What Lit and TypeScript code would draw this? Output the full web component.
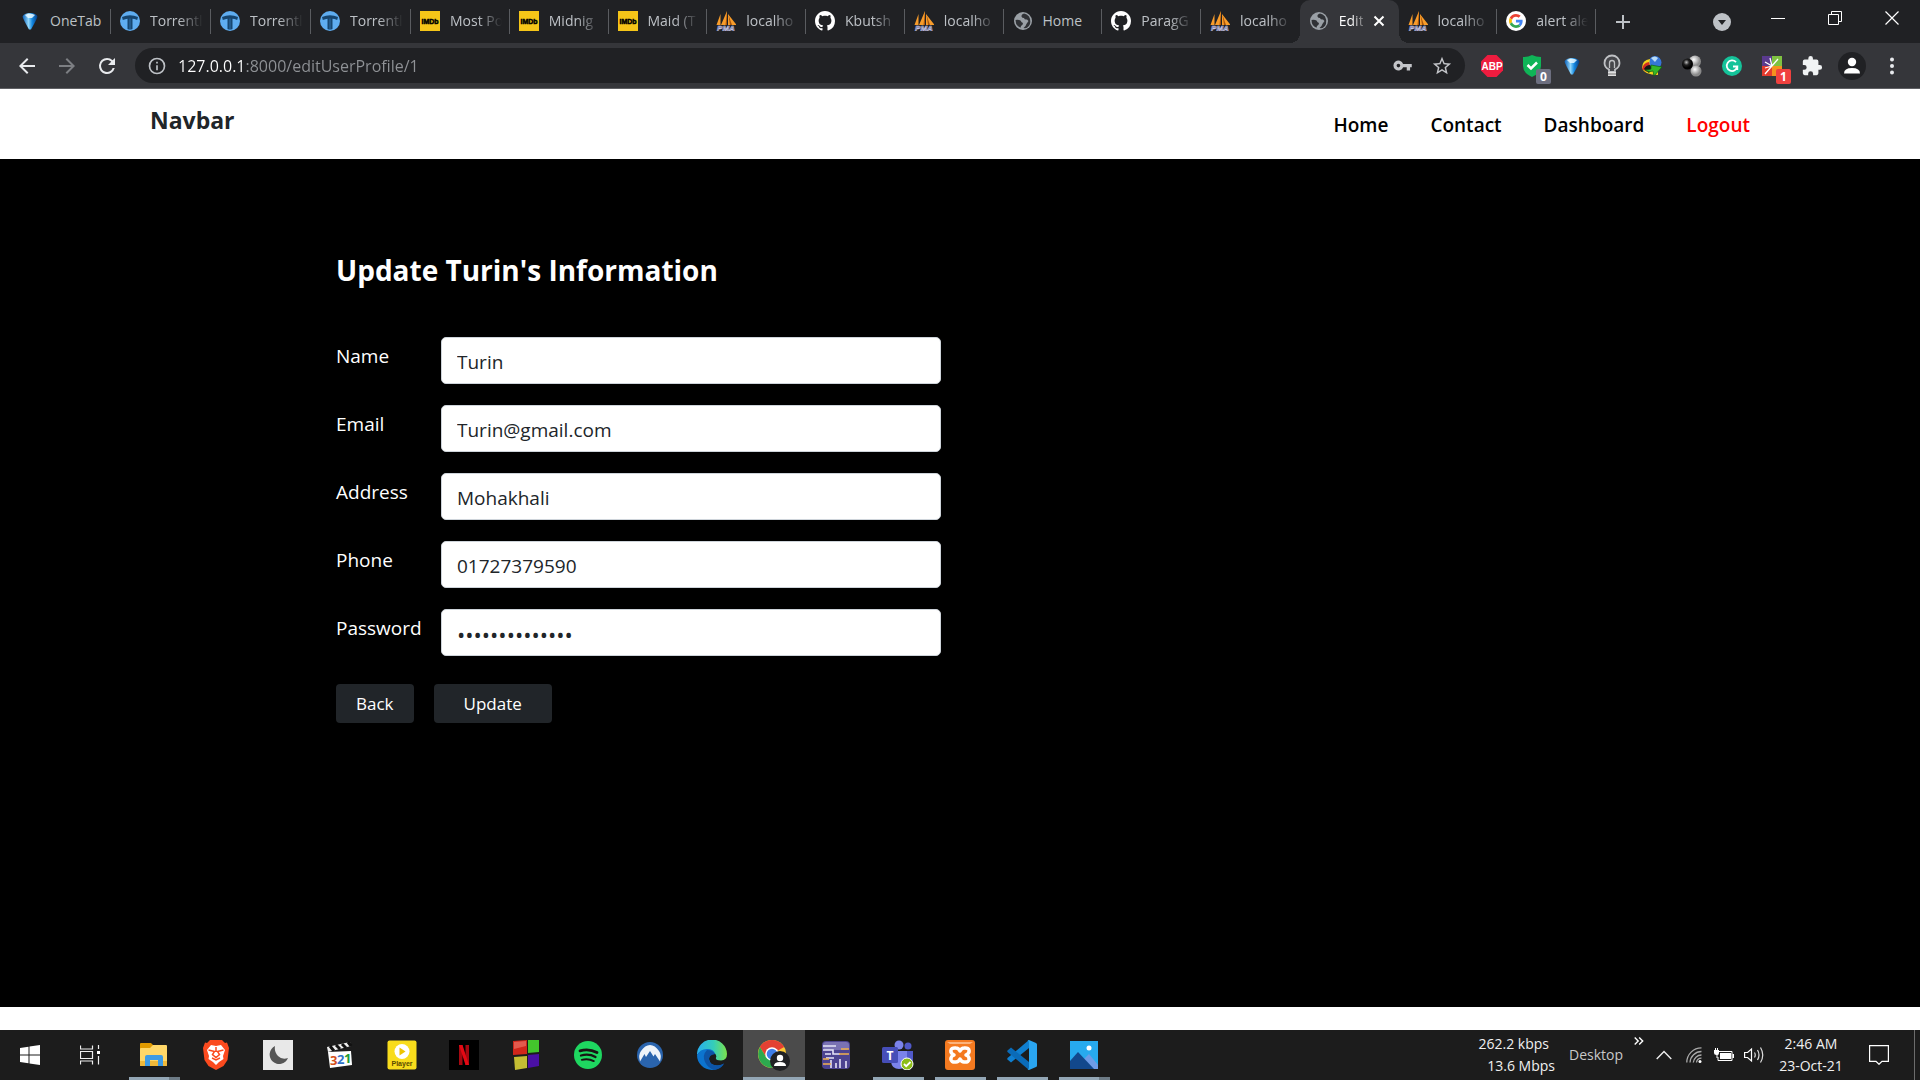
import { LitElement, html, css, svg, nothing } from "lit";
import { customElement } from "lit/decorators.js";
import { classMap } from "lit/directives/class-map.js";

const GITHUB = "M8 0C3.58 0 0 3.58 0 8c0 3.54 2.29 6.53 5.47 7.59.4.07.55-.17.55-.38 0-.19-.01-.82-.01-1.49-2.01.37-2.53-.49-2.69-.94-.09-.23-.48-.94-.82-1.13-.28-.15-.68-.52-.01-.53.63-.01 1.08.58 1.23.82.72 1.21 1.87.87 2.33.66.07-.52.28-.87.51-1.07-1.78-.2-3.64-.89-3.64-3.95 0-.87.31-1.59.82-2.15-.08-.2-.36-1.02.08-2.12 0 0 .67-.21 2.2.82.64-.18 1.32-.27 2-.27s1.36.09 2 .27c1.53-1.04 2.2-.82 2.2-.82.44 1.1.16 1.92.08 2.12.51.56.82 1.27.82 2.15 0 3.07-1.87 3.75-3.65 3.95.29.25.54.73.54 1.48 0 1.07-.01 1.93-.01 2.2 0 .21.15.46.55.38A8.01 8.01 0 0 0 16 8c0-4.42-3.58-8-8-8z";

const frame = (w: number, h: number, vb: string, body: unknown) =>
  html`<svg width=${w} height=${h} viewBox=${vb} aria-hidden="true">${body}</svg>`;

/* Browser favicons, 20px */
const favicons: Record<string, () => unknown> = {
  onetab: () => frame(20, 20, "0 0 20 20", svg`
    <defs><linearGradient id="ot" x1="0" x2="1"><stop offset="0" stop-color="#0a5fb8"/><stop offset=".4" stop-color="#8fd6fb"/><stop offset=".65" stop-color="#1287e0"/><stop offset="1" stop-color="#063a80"/></linearGradient></defs>
    <path d="M2.500 5.500Q4 2 10 2t7.500 3.500Q17 8 11 18.500h-2Q3 8 2.500 5.500z" fill="url(#ot)"/>
    <path d="M5 4q5-2.500 10 0l-3 3H8z" fill="#e9f8ff" opacity=".85"/>`),
  torrent: () => frame(20, 20, "0 0 20 20", svg`
    <circle cx="10" cy="10" r="10" fill="#5fadf0"/>
    <path d="M2 6q8-3.500 16 0l-.8 3q-2.700-1.300-4.700-1.300V18q-2.500 1-5 0V7.700q-2 .2-4.700 1.300z" fill="#17466f"/><path d="M10 7.500v11" stroke="#2f6fa8" stroke-width="1"/>`),
  imdb: () => frame(20, 20, "0 0 20 20", svg`
    <path d="M0 0h20v20H0z" fill="#f5c518"/>
    <text x="10" y="13" text-anchor="middle" font-family="Liberation Sans, sans-serif" font-size="7" font-weight="700" fill="#000" stroke="#000" stroke-width=".5">IMDb</text>`),
  pma: () => frame(20, 20, "0 0 20 20", svg`
    <path d="M4.500 3L.500 14h4zM11 0L5 14h6zM12 3v11h8.500zM16 5l3 6z" fill="#f89c2a"/><path d="M11 0v14H9.500zM12.500 4l3.500 10h-2z" fill="#a9560c"/>
    <text x="10" y="20" text-anchor="middle" font-family="Liberation Sans, sans-serif" font-size="8" font-weight="700" font-style="italic" fill="#34346a" stroke="#c4c4e0" stroke-width=".6">PMA</text>`),
  github: () => frame(20, 20, "0 0 16 16", svg`<path d=${GITHUB} fill="#fff"/>`),
  globe: () => frame(20, 20, "0 0 20 20", svg`
    <circle cx="10" cy="10" r="9" fill="#9aa0a6"/>
    <path d="M11 2.500q-3 1-2.500 3 .5 1.500 2.500 1.500.5 2 3 1.500l1.500 1.500q-2 2.500-3 5l-2 2Q15 18 17 13q1-4-1-7.500Q14 3 11 2.500zM2.500 9q3-.5 5 .5 1 2 2.500 2.500 0 2-2 3l-.5 1.700Q2.500 15 2.500 9z" fill="#303236"/>`),
  google: () => frame(20, 20, "0 0 20 20", svg`
    <circle cx="10" cy="10" r="10" fill="#fff"/><g transform="translate(3 3) scale(.29)">
    <path fill="#EA4335" d="M24 9.500c3.540 0 6.710 1.220 9.210 3.600l6.850-6.850C35.900 2.380 30.470 0 24 0 14.620 0 6.510 5.380 2.560 13.220l7.980 6.190C12.430 13.720 17.740 9.500 24 9.500z"/>
    <path fill="#4285F4" d="M46.980 24.550c0-1.570-.15-3.090-.38-4.550H24v9.020h12.940c-.58 2.960-2.260 5.480-4.780 7.180l7.730 6c4.510-4.180 7.090-10.360 7.090-17.650z"/>
    <path fill="#FBBC05" d="M10.530 28.590A14.500 14.500 0 0 1 9.770 24c0-1.600.27-3.140.76-4.590l-7.980-6.190A23.900 23.900 0 0 0 0 24c0 3.880.92 7.540 2.560 10.780z"/>
    <path fill="#34A853" d="M24 48c6.480 0 11.930-2.130 15.890-5.810l-7.730-6c-2.150 1.450-4.920 2.300-8.160 2.300-6.260 0-11.570-4.220-13.470-9.910l-7.980 6.190C6.510 42.620 14.620 48 24 48z"/></g>`),
};

/* Icons painted with the current text colour */
const glyphs: Record<string, () => unknown> = {
  back: () => frame(24, 24, "0 0 24 24", svg`<path d="M20 11H7.830l5.590-5.590L12 4l-8 8 8 8 1.410-1.410L7.830 13H20z" fill="currentColor"/>`),
  forward: () => frame(24, 24, "0 0 24 24", svg`<path d="M12 4l-1.410 1.410L16.170 11H4v2h12.170l-5.580 5.590L12 20l8-8z" fill="currentColor"/>`),
  reload: () => frame(24, 24, "0 0 24 24", svg`<path d="M17.650 6.350A7.960 7.960 0 0 0 12 4a8 8 0 1 0 7.730 10h-2.080A6 6 0 1 1 12 6c1.660 0 3.140.69 4.220 1.780L13 11h7V4z" fill="currentColor"/>`),
  info: () => frame(20, 20, "0 0 24 24", svg`<path d="M11 7h2v2h-2zm0 4h2v6h-2zm1-9a10 10 0 1 0 0 20 10 10 0 0 0 0-20zm0 18a8 8 0 1 1 0-16 8 8 0 0 1 0 16z" fill="currentColor"/>`),
  key: () => frame(20, 20, "0 0 24 24", svg`<path d="M12.650 10A6 6 0 1 0 12.650 14H17v4h4v-4h2v-4zM7 14.200a2.200 2.200 0 1 1 0-4.400 2.200 2.200 0 0 1 0 4.400z" fill="currentColor" transform="translate(-.5 -.5)"/>`),
  star: () => frame(22, 22, "0 0 24 24", svg`<path d="M22 9.240l-7.190-.62L12 2 9.190 8.630 2 9.240l5.460 4.730L5.820 21 12 17.270 18.180 21l-1.630-7.030zM12 15.400l-3.760 2.270 1-4.280-3.320-2.880 4.380-.38L12 6.100l1.710 4.040 4.380.38-3.320 2.880 1 4.280z" fill="currentColor"/>`),
  plus: () => frame(16, 16, "0 0 16 16", svg`<path d="M7 1h2v6h6v2H9v6H7V9H1V7h6z" fill="currentColor"/>`),
  close: () => frame(12, 12, "0 0 12 12", svg`<path d="M1.500 1.500l9 9M10.500 1.500l-9 9" stroke="currentColor" stroke-width="2"/>`),
  search: () => frame(18, 18, "0 0 18 18", svg`<circle cx="9" cy="9" r="9" fill="#bdc1c6"/><path d="M5 7h8l-4 5z" fill="#202124"/>`),
  minimize: () => frame(14, 14, "0 0 14 14", svg`<path d="M0 7.500h14" stroke="#fff"/>`),
  restore: () => frame(14, 14, "0 0 14 14", svg`<path d="M.5 3.500h10v10H.5zM3.500 3V.5h10v10H11" fill="none" stroke="#fff"/>`),
  closeWin: () => frame(14, 14, "0 0 14 14", svg`<path d="M.5.500l13 13M13.500.500l-13 13" stroke="#fff" stroke-width="1.200"/>`),
  menu: () => frame(20, 20, "0 0 20 20", svg`<g fill="#e8eaed"><circle cx="10" cy="3.500" r="2"/><circle cx="10" cy="10" r="2"/><circle cx="10" cy="16.500" r="2"/></g>`),
};

/* Extension icons */
const extensions: { name: string; badge?: string; tone?: string; art: () => unknown }[] = [
  { name: "Adblock Plus", art: () => frame(22, 22, "0 0 22 22", svg`
    <path d="M6.500 0h9L22 6.500v9L15.500 22h-9L0 15.500v-9z" fill="#ee1c3f"/>
    <text x="11" y="15" text-anchor="middle" font-family="Liberation Sans, sans-serif" font-size="10" font-weight="700" fill="#fff">ABP</text>`) },
  { name: "Safe browsing", badge: "0", tone: "grey", art: () => frame(20, 22, "0 0 20 22", svg`
    <path d="M1 2q5 0 9-2 4 2 9 2v9q0 7-9 11-9-4-9-11z" fill="#0fb457"/><path d="M5.500 10l3.500 3.500 6-6" stroke="#fff" stroke-width="2.500" fill="none"/>`) },
  { name: "OneTab", art: favicons.onetab },
  { name: "Lightbulb", art: () => frame(20, 24, "0 0 20 24", svg`
    <path d="M7 18v-2.500Q2.500 13.500 2.500 9a7.500 7.500 0 0 1 15 0q0 4.500-4.500 6.500V18z" fill="#46474b" stroke="#bfc1c4" stroke-width="1.800"/>
    <path d="M7.500 14V9a2.500 2.500 0 0 1 5 0v5" fill="none" stroke="#bfc1c4" stroke-width="1.300"/><path d="M6 18h8v4H6z" fill="#e0e0e0"/><path d="M6 20h8" stroke="#777"/>`) },
  { name: "Download manager", art: () => frame(22, 22, "0 0 22 22", svg`
    <circle cx="14" cy="7.500" r="6.500" fill="#3676d8"/><path d="M10 3q4-3 7 0l-3 4z" fill="#b9dcf7"/>
    <path d="M1 13q0-8 8-9-1 3 0 7l8 3v6Q3 20 1 13z" fill="#f3d21b"/><path d="M1 14q1-6 7-7l1 4q-4 1-3 6z" fill="#d12e21"/><path d="M3 14q2-4 6-4l2 3-3 5z" fill="#161616"/>
    <path d="M10 10l11 2-8 9-1-5q-4 2-8-1 4 0 6-1z" fill="#35b729" stroke="#0d6210" stroke-width=".7"/>`) },
  { name: "Spheres", art: () => frame(22, 22, "0 0 22 22", svg`
    <defs><radialGradient id="sg" cx=".4" cy=".35"><stop offset="0" stop-color="#fff"/><stop offset="1" stop-color="#8a8a8a"/></radialGradient><radialGradient id="sb" cx=".4" cy=".35"><stop offset="0" stop-color="#bbb"/><stop offset=".5" stop-color="#222"/><stop offset="1" stop-color="#000"/></radialGradient></defs>
    <circle cx="14" cy="6.500" r="6" fill="url(#sg)"/><circle cx="15" cy="16" r="5.500" fill="url(#sg)"/><circle cx="6.500" cy="9" r="5.500" fill="url(#sb)"/>`) },
  { name: "Grammarly", art: () => frame(20, 20, "0 0 20 20", svg`
    <circle cx="10" cy="10" r="10" fill="#15c39a"/><path d="M14 6.200a5.300 5.300 0 1 0 1.300 4.300H11M15.300 10.500V14" fill="none" stroke="#fff" stroke-width="1.800"/>`) },
  { name: "Capture", badge: "1", tone: "red", art: () => frame(20, 20, "0 0 20 20", svg`
    <path d="M0 0h10v10H0z" fill="#5a3a8e"/><path d="M10 0h10v10H10z" fill="#7fc241"/><path d="M0 10h10v10H0z" fill="#e33b2e"/><path d="M10 10h10v10H10z" fill="#f6921e"/>
    <path d="M3 18L16 3M10 10L3 6M10 10L8 2M10 10l-7 2" stroke="#fff" stroke-width="1.300"/>`) },
  { name: "Extensions", art: () => frame(22, 22, "0 0 24 24", svg`
    <path d="M20.500 11H19V7a2 2 0 0 0-2-2h-4V3.500a2.500 2.500 0 0 0-5 0V5H4a2 2 0 0 0-2 2v3.800h1.500a2.700 2.700 0 0 1 0 5.400H2V20a2 2 0 0 0 2 2h3.800v-1.500a2.700 2.700 0 0 1 5.400 0V22H17a2 2 0 0 0 2-2v-4h1.500a2.500 2.500 0 0 0 0-5z" fill="#f1f3f4"/>`) },
  { name: "Profile", art: () => frame(28, 28, "0 0 28 28", svg`
    <circle cx="14" cy="14" r="14" fill="#202124"/><circle cx="14" cy="10" r="4.200" fill="#fff"/><path d="M6 21.500q0-5.500 8-5.500t8 5.500z" fill="#fff"/>`) },
];

const tabs: { icon: string; title: string; active?: boolean }[] = [
  { icon: "onetab", title: "OneTab" },
  { icon: "torrent", title: "Torrentl" },
  { icon: "torrent", title: "Torrentl" },
  { icon: "torrent", title: "Torrentl" },
  { icon: "imdb", title: "Most Po" },
  { icon: "imdb", title: "Midnig" },
  { icon: "imdb", title: "Maid (T" },
  { icon: "pma", title: "localho" },
  { icon: "github", title: "Kbutsh" },
  { icon: "pma", title: "localho" },
  { icon: "globe", title: "Home" },
  { icon: "github", title: "ParagG" },
  { icon: "pma", title: "localho" },
  { icon: "globe", title: "Edit", active: true },
  { icon: "pma", title: "localho" },
  { icon: "google", title: "alert ale" },
];

type App = { name: string; state?: "open" | "stacked" | "active"; art: () => unknown };
const apps: App[] = [
  { name: "File Explorer", state: "stacked", art: () => frame(28, 24, "0 0 28 24", svg`
    <path d="M0 1q0-1 1-1h10l3 3v4H0z" fill="#e09a00"/><path d="M0 6q0-1 1-1h9l3-3h13q1 0 1 1v19q0 1-1 1H1q-1 0-1-1z" fill="#ffd768"/><path d="M0 18h27v4q0 1-1 1H1q-1 0-1-1z" fill="#f0b93a"/>
    <path d="M5 23v-9q0-2 2-2h14q2 0 2 2v9h-5v-6h-8v6z" fill="#3e9be4"/>`) },
  { name: "Brave", art: () => frame(26, 30, "0 0 26 30", svg`
    <path d="M7 0h12l3 3 2-.5L26 8l-1.500 12-4 6L13 30l-7.500-4-4-6L0 8l2-5.500L4 3z" fill="#fb4a1e"/>
    <path d="M8 5l5 1 5-1 4 5-2 6 .5 3-4.500 3-3 3-3-3-4.500-3L6 16l-2-6z" fill="#fff"/><path d="M5.500 10l6 1.500-2 3 3.500 3 3.500-3-2-3 6-1.500M9 18l4 2 4-2M13 7v5" fill="none" stroke="#fb4a1e" stroke-width="1.500"/>`) },
  { name: "Night mode", art: () => frame(30, 30, "0 0 30 30", svg`
    <path d="M0 0h30v30H0z" fill="#e8e8e8"/><path d="M12 6a9.500 9.500 0 1 0 13 12Q19 20 15 16T12 6z" fill="#555"/>`) },
  { name: "Media Player Classic", art: () => frame(28, 28, "0 0 28 28", svg`
    <path d="M1 6L24 1l1 4L2 11z" fill="#eee"/><path d="M4 5l4 5M10 4l4 4M16 3l4 4M22 1l3 4" stroke="#111" stroke-width="3"/><path d="M2 11l23-1 1 14-22 3z" fill="#fff"/>
    <g font-family="Open Sans, sans-serif" font-size="13" font-weight="700"><text x="4" y="24" fill="#d4501c">3</text><text x="11" y="23" fill="#2f73c9">2</text><text x="18" y="22" fill="#239a35">1</text></g>`) },
  { name: "Player", art: () => frame(30, 30, "0 0 30 30", svg`
    <rect x=".500" y=".500" width="29" height="29" rx="2" fill="#f8dc1c"/><circle cx="15" cy="11.500" r="7.500" fill="#fff"/><path d="M12.500 7.500l6 4-6 4z" fill="#eec400"/>
    <text x="15" y="26" text-anchor="middle" font-family="Liberation Sans, sans-serif" font-size="7" font-weight="700" fill="#5a4a00">Player</text>`) },
  { name: "Netflix", art: () => frame(30, 30, "0 0 30 30", svg`
    <path d="M0 0h30v30H0z" fill="#000"/><path d="M10 5h3.500v20H10zM16.500 5H20v20h-3.500z" fill="#a60811"/><path d="M10 5h3.500L20 25h-3.500z" fill="#e50914"/>`) },
  { name: "Start menu tiles", art: () => frame(28, 30, "0 0 28 30", svg`
    <path d="M1 1l14-1v14L1 15z" fill="#d0261a"/><path d="M16 0h11v12l-11 1z" fill="#43c62c"/><path d="M2 17l13-1v12L3 30z" fill="#c4bd33"/><path d="M16 15l11-1v12l-11 2z" fill="#4a10a4"/><path d="M2 2l12-1v5L2 9z" fill="#e25a4d"/>`) },
  { name: "Spotify", art: () => frame(28, 28, "0 0 28 28", svg`
    <circle cx="14" cy="14" r="14" fill="#1ed760"/><g fill="none" stroke="#191414" stroke-linecap="round"><path d="M6 9.800q9-2.600 17 1.700" stroke-width="2.800"/><path d="M7 14.500q8-2.200 14.500 1.500" stroke-width="2.300"/><path d="M7.800 18.800q6.500-1.700 12 1.300" stroke-width="1.900"/></g>`) },
  { name: "NordVPN", art: () => frame(26, 26, "0 0 26 26", svg`
    <circle cx="13" cy="13" r="13" fill="#2a64ad"/><path d="M3 19.500Q1 13 4 9q4-6 9-6t9 6q3 4 1 10.500L18 12l-1.500 2.500L13 9l-4 6-1.500-3z" fill="#eef3f9"/>`) },
  { name: "Edge", art: () => frame(30, 30, "0 0 30 30", svg`
    <defs><linearGradient id="ed" x1="0" x2="1"><stop offset="0" stop-color="#27aef0"/><stop offset=".55" stop-color="#35cdb9"/><stop offset="1" stop-color="#7be34b"/></linearGradient></defs>
    <path d="M0 15a15 15 0 0 1 30-1q0 6-6 6.500-6 0-5-3 1-1.500-1-4Q12 8 5 11q-4 2-5 4z" fill="url(#ed)"/>
    <path d="M0 15Q3 9 10 9q7 0 8 5-6 0-6 5 1 7 9 6.500 4 0 6-2-4 6.500-12 6.500A15 15 0 0 1 0 15z" fill="#0c74cf"/><path d="M10 10q-5 5-2 12 3 6 9 8 7-1 10-6.500-4 2-7 2-8-1-8-6.500 0-4 6-5-2-4-8-4z" fill="#0d54a6"/>`) },
  { name: "Chrome", state: "active", art: () => frame(34, 32, "0 0 34 32", svg`
    <circle cx="15" cy="15" r="14" fill="#fbc934"/><path d="M15 15L2.900 8A14 14 0 0 1 27.100 8z" fill="#e34133"/><path d="M15 8h12.100A14 14 0 0 0 3 8l6 10z" fill="#e34133"/><path d="M3 8a14 14 0 0 0 12 21l6-10.500L9 18z" fill="#2da94f"/><circle cx="15" cy="15" r="6.800" fill="#fff"/><circle cx="15" cy="15" r="5.300" fill="#3f7ee8"/>
    <circle cx="23" cy="22" r="10" fill="#202124"/><circle cx="23" cy="19" r="3.200" fill="#fff"/><path d="M17 27q0-4 6-4t6 4z" fill="#fff"/>`) },
  { name: "Circuit", art: () => frame(28, 28, "0 0 28 28", svg`
    <rect width="28" height="28" rx="4" fill="#4c4390"/><rect x="1" y="1" width="26" height="8" rx="3" fill="#7a72b3"/><path d="M1 5h13M1 9h10v4h7M3 13h6M9 27v-8M14 27v-5M18 27v-9M24 27v-7M4 17h8" stroke="#e5e3f6" stroke-width="1.600" fill="none"/><path d="M19 8h8M17 13h10M1 18h6M1 23h8" stroke="#f1b14d" stroke-width="1.600"/>`) },
  { name: "Teams", state: "open", art: () => frame(32, 30, "0 0 32 30", svg`
    <circle cx="17" cy="5" r="4.500" fill="#7b83eb"/><circle cx="26" cy="6" r="3.500" fill="#5059c9"/><path d="M22 11h9v9q-2 5-7 3z" fill="#5059c9"/><path d="M10 11h15v11q-1 7-8 7t-8-7z" fill="#7b83eb"/>
    <rect y="7" width="16" height="16" rx="1.500" fill="#464eb8"/><text x="8" y="20" text-anchor="middle" font-family="Open Sans, sans-serif" font-size="12" font-weight="700" fill="#fff">T</text>
    <circle cx="25" cy="24" r="6" fill="#8cbd18" stroke="#fff"/><path d="M22 24l2.200 2.200L28.500 22" fill="none" stroke="#fff" stroke-width="1.800"/>`) },
  { name: "XAMPP", state: "open", art: () => frame(30, 30, "0 0 30 30", svg`
    <rect width="30" height="30" rx="3" fill="#f47a20"/><path d="M2 2h26l-3 2H5z" fill="#fbb37c"/>
    <path d="M11 8c-7-1-6 6-2 7-4 1-5 8 2 7 2 0 3-1 4-3 1 2 2 3 4 3 7 1 6-6 2-7 4-1 5-8-2-7-2 0-3 1-4 3-1-2-2-3-4-3z" fill="none" stroke="#fff" stroke-width="3.500" stroke-linejoin="round"/>`) },
  { name: "Visual Studio Code", state: "open", art: () => frame(30, 30, "0 0 30 30", svg`
    <path d="M22 0v8L4 22.500l-3.500-3q-.5-.7 0-1.500z" fill="#0f7fd0"/><path d="M22 30v-8L4 7.500l-3.500 3q-.5.700 0 1.500z" fill="#0a6bb8"/><path d="M22 0l7 3q1 .5 1 1.500v21q0 1-1 1.500l-7 3-1.500-.7q1.500 0 1.500-2V2.700q0-2-1.500-2z" fill="#2aa5f0"/>`) },
  { name: "Photos", state: "stacked", art: () => frame(28, 28, "0 0 28 28", svg`
    <path d="M0 0h28v28H0z" fill="#27aaee"/><path d="M28 24L19 13l-6 6 8 9h7z" fill="#6e9be6"/><path d="M0 20L8 11l16 17H0z" fill="#12488c"/><circle cx="19" cy="7" r="2.500" fill="#fff"/>`) },
];

@customElement("browser-chrome")
class BrowserChrome extends LitElement {
  static styles = css`
    :host { display: block; color: #bdc1c6; font: 14px/20px "Open Sans", "Noto Sans", sans-serif; }
    svg { display: block; flex: none; }
    button { border: 0; padding: 0; margin: 0; background: none; color: inherit; font: inherit; display: flex; align-items: center; justify-content: center; }
    .strip { display: flex; height: 43px; background: #202124; padding-left: 11px; }
    .tabs { flex: 1; display: grid; grid-template-columns: repeat(4, 100px) repeat(12, minmax(0, 1fr)); }
    .tab { position: relative; justify-content: flex-start; gap: 10px; padding: 0 8px 1px 9px; min-width: 0; height: 43px; text-align: left; }
    .tab::after { content: ""; position: absolute; right: 0; top: 9px; width: 1px; height: 25px; background: #5a5c60; }
    .tab.bare::after { display: none; }
    .title { flex: 1; min-width: 0; white-space: nowrap; overflow: hidden; mask-image: linear-gradient(90deg, #000 calc(100% - 24px), transparent); }
    .title.short { mask-image: none; }
    .active { background: #35363a; border-radius: 10px 10px 0 0; color: #fff; padding-right: 14px; z-index: 1; }
    .active .title { mask-image: linear-gradient(90deg, #000 50%, rgba(0, 0, 0, 0.300)); }
    .active::before, .tab.active::after { content: ""; display: block; position: absolute; top: auto; bottom: 0; width: 10px; height: 10px; }
    .active::before { left: -10px; background: radial-gradient(circle at 0 0, transparent 10px, #35363a 10px); }
    .tab.active::after { right: -10px; background: radial-gradient(circle at 100% 0, transparent 10px, #35363a 10px); }
    .window { flex: none; display: flex; align-items: center; width: 324px; }
    .new { width: 54px; height: 43px; }
    .find { margin-left: 62px; width: 20px; height: 43px; }
    .controls { display: flex; flex: 1; align-self: flex-start; margin-left: 18px; }
    .controls button { flex: 1; height: 36px; }
    .toolbar { display: flex; align-items: center; height: 45px; background: #35363a; border-bottom: 1px solid #5f6064; padding: 0 8px 0 7px; }
    .nav { width: 40px; height: 40px; color: #e8eaed; }
    .nav.off { color: #7d7f83; }
    .omnibox { flex: 1; display: flex; align-items: center; height: 35px; margin: 0 7px 0 8px; padding: 0 12px; border-radius: 18px; background: #202124; }
    .address { flex: 1; min-width: 0; border: 0; outline: 0; margin-left: 11px; padding: 0; font: 16px/24px "Open Sans", "Noto Sans", sans-serif; color: transparent; background: linear-gradient(90deg, #fff 65px, #8f9296 65px); -webkit-background-clip: text; background-clip: text; }
    .omnibox button { margin-left: 18px; color: #c3c5c9; }
    .ext { position: relative; width: 40px; height: 40px; }
    .badge { position: absolute; left: 24px; top: 23px; min-width: 15px; height: 15px; border-radius: 2px; color: #fff; font: 700 12px/15px "Open Sans", sans-serif; text-align: center; }
    .grey { background: #6d6f80; }
    .red { background: #f0413f; }
  `;

  render() {
    return html`
      <div class="strip">
        <div class="tabs" role="tablist">
          ${tabs.map((t, i) => html`
            <button role="tab" aria-selected=${t.active ? "true" : "false"}
              class=${classMap({ tab: true, active: !!t.active, bare: !!tabs[i + 1]?.active })}>
              ${favicons[t.icon]()}
              <span class=${classMap({ title: true, short: t.title === "OneTab" || t.title === "Home" })}>${t.title}</span>
              ${t.active ? glyphs.close() : nothing}
            </button>`)}
        </div>
        <div class="window">
          <button class="new" aria-label="New tab">${glyphs.plus()}</button>
          <button class="find" aria-label="Search tabs">${glyphs.search()}</button>
          <div class="controls">
            <button aria-label="Minimize">${glyphs.minimize()}</button>
            <button aria-label="Restore">${glyphs.restore()}</button>
            <button aria-label="Close">${glyphs.closeWin()}</button>
          </div>
        </div>
      </div>
      <div class="toolbar">
        <button class="nav" aria-label="Back">${glyphs.back()}</button>
        <button class="nav off" aria-label="Forward">${glyphs.forward()}</button>
        <button class="nav" aria-label="Reload">${glyphs.reload()}</button>
        <div class="omnibox">
          ${glyphs.info()}
          <input class="address" type="text" aria-label="Address" .value=${"127.0.0.1:8000/editUserProfile/1"}>
          <button aria-label="Passwords">${glyphs.key()}</button>
          <button aria-label="Bookmark">${glyphs.star()}</button>
        </div>
        ${extensions.map((e) => html`
          <button class="ext" aria-label=${e.name}>${e.art()}${e.badge ? html`<span class="badge ${e.tone}">${e.badge}</span>` : nothing}</button>`)}
        <button class="ext" aria-label="Menu">${glyphs.menu()}</button>
      </div>`;
  }
}

const fields = [
  { id: "name", label: "Name", type: "text", value: "Turin" },
  { id: "email", label: "Email", type: "email", value: "Turin@gmail.com" },
  { id: "address", label: "Address", type: "text", value: "Mohakhali" },
  { id: "phone", label: "Phone", type: "text", value: "01727379590" },
  { id: "password", label: "Password", type: "password", value: "turinpassword1" },
];

@customElement("profile-page")
class ProfilePage extends LitElement {
  static styles = css`
    :host { display: flex; flex-direction: column; background: #fff; font: 19px/28px "Open Sans", "Noto Sans", sans-serif; }
    .navbar { display: flex; justify-content: space-between; height: 70px; padding: 0 170px 0 150px; background: #fff; font-weight: 600; }
    a { color: #000; text-decoration: none; }
    .brand { color: #212529; font-size: 23px; font-weight: 700; line-height: 62px; }
    .links { display: flex; gap: 42px; line-height: 73px; }
    .logout { color: #f00; }
    main { flex: 1; margin-bottom: 23px; padding: 88px 336px 0; background: #000; color: #fff; }
    h1 { margin: 0; font-size: 28px; line-height: 46px; font-weight: 700; }
    form { margin-top: 44px; max-width: 605px; }
    .field { display: grid; grid-template-columns: 105px 1fr; margin-bottom: 21px; }
    label { line-height: 39px; }
    input { box-sizing: border-box; width: 100%; height: 47px; margin: 0; padding: 2px 15px 0; border: 1px solid #ced4da; border-radius: 5px; background: #fff; color: #212529; font: inherit; outline: 0; }
    input[type="password"] { font-size: 22px; }
    .actions { display: flex; gap: 20px; margin-top: 28px; }
    .btn { height: 39px; border: 0; border-radius: 4px; padding: 0 20px; background: #212529; color: #fff; font: 17px/39px "Open Sans", "Noto Sans", sans-serif; }
    .wide { padding: 0 30px; }
  `;

  render() {
    return html`
      <nav class="navbar">
        <a class="brand" href="#">Navbar</a>
        <div class="links"><a href="#">Home</a><a href="#">Contact</a><a href="#">Dashboard</a><a class="logout" href="#">Logout</a></div>
      </nav>
      <main>
        <h1>Update Turin's Information</h1>
        <form @submit=${(e: Event) => e.preventDefault()}>
          ${fields.map((f) => html`
            <div class="field"><label for=${f.id}>${f.label}</label><input id=${f.id} type=${f.type} .value=${f.value} autocomplete="off"></div>`)}
          <div class="actions"><button class="btn" type="button">Back</button><button class="btn wide" type="submit">Update</button></div>
        </form>
      </main>`;
  }
}

@customElement("task-bar")
class TaskBar extends LitElement {
  static styles = css`
    :host { display: flex; height: 50px; background: #1c1c1c; color: #f0f0f0; font: 14px/22px "Open Sans", "Noto Sans", sans-serif; }
    svg { display: block; flex: none; }
    button { position: relative; display: flex; align-items: center; justify-content: center; border: 0; margin: 0; padding: 0; background: none; color: inherit; font: inherit; }
    .system { width: 60px; }
    .apps { display: flex; margin-left: 3px; }
    .app { width: 62px; }
    .open::after, .stacked::after, .active::after { content: ""; position: absolute; bottom: 0; left: 6px; width: 51px; height: 3px; background: #93a6b5; }
    .stacked::after { background: linear-gradient(90deg, #93a6b5 40px, #6d7b86 40px); }
    .active { background: #4b4b4b; }
    .active::after { left: 0; width: 100%; }
    .tray { display: flex; align-items: center; margin-left: auto; }
    .rate { width: 80px; text-align: right; white-space: nowrap; margin-right: 14px; }
    .rate div:first-child { padding-right: 6px; }
    .desktop { color: #c8c8c8; margin-right: 11px; }
    .more { align-self: flex-start; height: 22px; margin-right: 5px; }
    .tray-icon { width: 30px; height: 50px; }
    .clock { width: 84px; flex-direction: column; height: 50px; }
    .notes { width: 52px; height: 50px; }
    .peek { width: 6px; height: 50px; border-left: 1px solid #6c6c6c; margin-left: 9px; }
  `;

  render() {
    return html`
      <button class="system" aria-label="Start">${frame(20, 20, "0 0 20 20", svg`<path d="M0 3l8.500-1.200v7.700H0zM9.500 1.600L20 0v9.500H9.500zM0 10.500h8.500v7.700L0 17zM9.500 10.500H20V20L9.500 18.400z" fill="#fff"/>`)}</button>
      <button class="system" aria-label="Task view">${frame(20, 20, "0 0 20 20", svg`<path d="M.500.500V4H12.500V.500M.500 19.500V16H12.500V19.500M.500 6.500h12v7H.500zM18.500 0v4M18.500 11v8.500" fill="none" stroke="#eee" stroke-width="1.200"/><path d="M17 6h3v3h-3z" fill="#fff"/>`)}</button>
      <div class="apps">${apps.map((a) => html`<button class="app ${a.state ?? ""}" aria-label=${a.name}>${a.art()}</button>`)}</div>
      <div class="tray">
        <div class="rate"><div>262.2 kbps</div><div>13.6 Mbps</div></div>
        <span class="desktop">Desktop</span>
        <button class="more" aria-label="More">${frame(10, 8, "0 0 10 8", svg`<path d="M.7.500L4.200 4 .7 7.500M5.200.500L8.700 4 5.200 7.500" fill="none" stroke="#fff" stroke-width="1.400"/>`)}</button>
        <button class="tray-icon" aria-label="Hidden icons">${frame(16, 10, "0 0 16 10", svg`<path d="M.7 9L8 1.500 15.300 9" fill="none" stroke="#eee" stroke-width="1.400"/>`)}</button>
        <button class="tray-icon" aria-label="Wi-Fi">${frame(16, 16, "0 0 16 16", svg`<g fill="none" stroke="#aaa" stroke-width="1.300"><path d="M.8 15.500A14.700 14.700 0 0 1 15.500.800"/><path d="M4 15.500A11.500 11.500 0 0 1 15.500 4.500"/><path d="M7.300 15.500a8.200 8.200 0 0 1 8.200-7.500"/><path d="M10.500 15.500a5 5 0 0 1 5-4.300"/></g><circle cx="14" cy="14.500" r="1.500" fill="#fff"/>`)}</button>
        <button class="tray-icon" aria-label="Battery">${frame(20, 14, "0 0 20 14", svg`<path d="M5 3.500h13v9H4V9" fill="none" stroke="#fff"/><path d="M6 5h11v6H6z" fill="#fff"/><path d="M18.500 6h1.500v4h-1.500zM0 2h5v3q0 2-1.500 2v3h-1V7Q0 7 0 5zM1 0h1v2H1zM3 0h1v2H3z" fill="#fff"/>`)}</button>
        <button class="tray-icon" aria-label="Volume">${frame(20, 18, "0 0 20 18", svg`<path d="M.6 6.500h3L7.500 3v12L3.600 11.500h-3z" fill="none" stroke="#fff" stroke-width="1.200"/><path d="M10.500 6.500q1.500 2.500 0 5M13.500 4q3 5 0 10M16.500 1.500q4.500 7.500 0 15" fill="none" stroke="#ddd" stroke-width="1.200"/>`)}</button>
        <button class="clock"><span>2:46 AM</span><span>23-Oct-21</span></button>
        <button class="notes" aria-label="Notifications">${frame(20, 20, "0 0 20 20", svg`<path d="M.600.600h18.800v15.800H13L10 19.300 7 16.400H.600z" fill="none" stroke="#fff" stroke-width="1.200"/>`)}</button>
        <button class="peek" aria-label="Show desktop"></button>
      </div>`;
  }
}

@customElement("app-root")
class AppRoot extends LitElement {
  static styles = css`
    :host { display: flex; flex-direction: column; min-height: 100vh; }
    profile-page { flex: 1; }
  `;

  render() {
    return html`<browser-chrome></browser-chrome><profile-page></profile-page><task-bar></task-bar>`;
  }
}
